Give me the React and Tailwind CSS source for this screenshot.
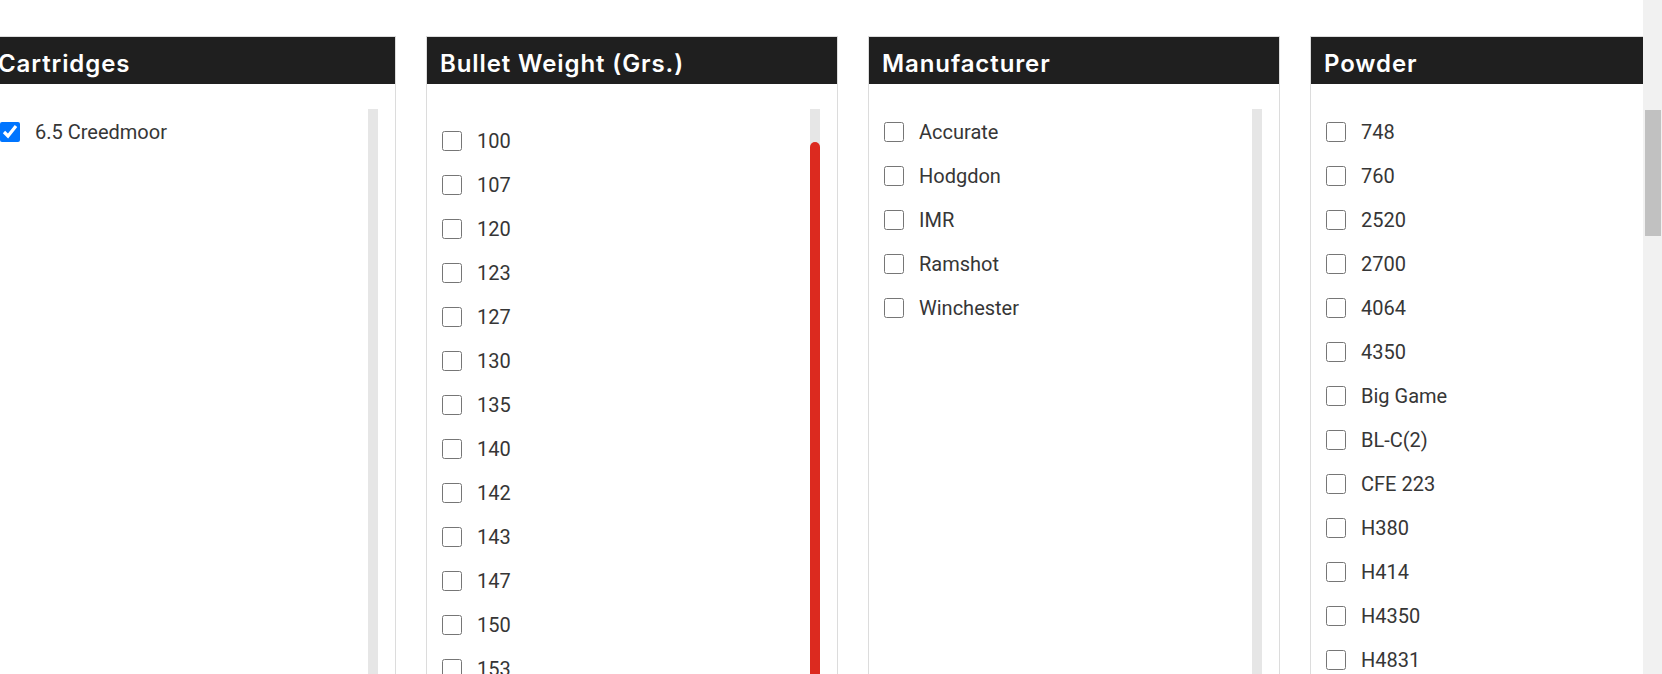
const cartridges = [{ label: '6.5 Creedmoor', checked: true }]

const weights = ['100', '107', '120', '123', '127', '130', '135', '140', '142', '143', '147', '150', '153', '156', '160']

const makers = ['Accurate', 'Hodgdon', 'IMR', 'Ramshot', 'Winchester']

const powders = ['748', '760', '2520', '2700', '4064', '4350', 'Big Game', 'BL-C(2)', 'CFE 223', 'H380', 'H414', 'H4350', 'H4831', 'H4895', 'H1000']

function Option({ label, checked }) {
  return (
    <label className="flex items-center gap-[15px] h-11 shrink-0">
      <input type="checkbox" defaultChecked={checked} className="w-5 h-5 m-0 shrink-0" />
      <span className="font-[Roboto,sans-serif] text-[20px] text-[#363636]">{label}</span>
    </label>
  )
}

function FilterPanel({ title, items, offset = 0, thumb = false }) {
  return (
    <div className="w-[412px] h-[700px] shrink-0 border-x border-t border-[#dcdcdc] bg-white flex flex-col">
      <div className="h-[47px] px-[13px] pt-[7px] bg-[#1f1f1f] whitespace-nowrap">
        <h2 className="font-[Inter,sans-serif] font-semibold text-[24px] leading-[40px] tracking-[0.9px] text-white">{title}</h2>
      </div>

      <div className="mt-[25px] flex flex-1 min-h-0 pr-[17px]">
        <div className="flex-1 flex flex-col pl-[15px] overflow-hidden" style={{ paddingTop: offset + 1 }}>
          {items.map((it) => (
            <Option key={it.label} label={it.label} checked={it.checked} />
          ))}
        </div>
        <div className="w-[10px] shrink-0 bg-[#e6e6e6] flex flex-col">
          {thumb && <div className="mt-[33px] flex-1 bg-[#dc2a1f] rounded-t-[5px]" />}
        </div>
      </div>
    </div>
  )
}

const asItems = (list) => list.map((label) => ({ label }))

export default function App() {
  return (
    <div className="flex h-[674px] w-full overflow-hidden bg-white">
      <div className="flex-1 min-w-0 overflow-hidden">
        <div className="flex gap-[30px] -ml-4 pt-9">
          <FilterPanel title="Cartridges" items={cartridges} />
          <FilterPanel title="Bullet Weight (Grs.)" items={asItems(weights)} offset={9} thumb />
          <FilterPanel title="Manufacturer" items={asItems(makers)} />
          <FilterPanel title="Powder" items={asItems(powders)} />
        </div>
      </div>

      {/* page scrollbar */}
      <div className="w-[19px] shrink-0 bg-[#f1f1f1] pl-[2px] pr-px">
        <div className="mt-[110px] h-[126px] bg-[#c1c1c1]" />
      </div>
    </div>
  )
}
